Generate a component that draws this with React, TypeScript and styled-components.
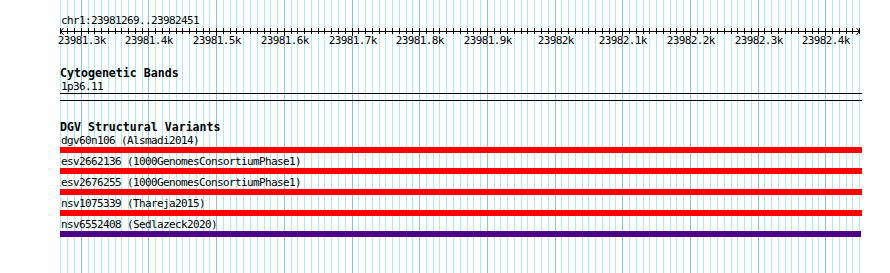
import styled, { createGlobalStyle } from "styled-components";

const START = 23981269;
const END = 23982451;
const X0 = 60.3;
const SCALE = 0.6768;
const LEFT = 60;
const TRACK_WIDTH = 802;

const toX = (pos: number) => Math.floor(X0 + (pos - START) * SCALE) - LEFT;

const gridPositions: number[] = [];
for (let p = 23981270; p <= 23982450; p += 10) gridPositions.push(p);

const majorLabel = (p: number) => {
  const k = p / 1000;
  return `${Number.isInteger(k) ? k : k.toFixed(1)}k`;
};

interface Variant {
  name: string;
  study: string;
  color: string;
  width: number;
}

const variants: Variant[] = [
  { name: "dgv60n106", study: "Alsmadi2014", color: "#ff0000", width: 802 },
  { name: "esv2662136", study: "1000GenomesConsortiumPhase1", color: "#ff0000", width: 802 },
  { name: "esv2676255", study: "1000GenomesConsortiumPhase1", color: "#ff0000", width: 802 },
  { name: "nsv1075339", study: "Thareja2015", color: "#ff0000", width: 802 },
  { name: "nsv6552408", study: "Sedlazeck2020", color: "#4d0083", width: 801 },
];

const GlobalStyle = createGlobalStyle`
  html, body {
    margin: 0;
    padding: 0;
    background: #ffffff;
  }
`;

const Page = styled.div`
  position: relative;
  width: 890px;
  height: 273px;
  overflow: hidden;
  padding-left: ${LEFT}px;
  box-sizing: border-box;
  font-family: "DejaVu Sans Mono", "Liberation Mono", monospace;
  color: #000000;
`;

const GridLayer = styled.svg`
  position: absolute;
  top: 0;
  left: ${LEFT}px;
  z-index: 0;
`;

const Tracks = styled.div`
  position: relative;
  z-index: 1;
  width: ${TRACK_WIDTH}px;
  display: flex;
  flex-direction: column;
`;

const PositionLabel = styled.div`
  margin-top: 15px;
  padding-left: 1px;
  font-size: 11px;
  letter-spacing: -0.62px;
  line-height: 12px;
  height: 12px;
  white-space: pre;
`;

const Ruler = styled.svg`
  display: block;
  overflow: visible;
  font-family: "DejaVu Sans Mono", "Liberation Mono", monospace;
  font-size: 11px;
  letter-spacing: -0.62px;
`;

const Track = styled.section<{ $gap: number }>`
  margin-top: ${(p) => p.$gap}px;
  display: flex;
  flex-direction: column;
`;

const TrackTitle = styled.h3`
  margin: 0;
  font-size: 11.6px;
  font-weight: bold;
  line-height: 14px;
  height: 14px;
  white-space: pre;
`;

const ItemLabel = styled.div`
  padding-top: 1px;
  padding-left: 1px;
  font-size: 11px;
  letter-spacing: -0.62px;
  line-height: 12px;
  height: 12px;
  white-space: pre;
`;

const BandBox = styled.div`
  height: 6px;
  border-top: 1px solid #000000;
  border-bottom: 1px solid #000000;
`;

const Row = styled.div`
  display: flex;
  flex-direction: column;
  margin-bottom: 2px;
`;

const FeatureBar = styled.div<{ $color: string; $width: number }>`
  height: 6px;
  width: ${(p) => p.$width}px;
  background: ${(p) => p.$color};
`;

const App = () => {
  return (
    <>
      <GlobalStyle />
      <Page>
        <GridLayer width={TRACK_WIDTH} height={273} shapeRendering="crispEdges">
          {gridPositions.map((p) => (
            <rect
              key={p}
              x={toX(p)}
              y={0}
              width={1}
              height={273}
              fill={p % 100 === 0 ? "#84c4ea" : "#aeeaf2"}
            />
          ))}
        </GridLayer>
        <Tracks>
          <PositionLabel>{`chr1:${START}..${END}`}</PositionLabel>
          <Ruler width={TRACK_WIDTH} height={24}>
            <g shapeRendering="crispEdges">
              <rect x={0} y={4} width={800} height={1} fill="#000" />
              {gridPositions.map((p) => (
                <rect
                  key={p}
                  x={toX(p)}
                  y={1}
                  width={1}
                  height={p % 100 === 0 ? 8 : 6}
                  fill="#000"
                />
              ))}
            </g>
            <polyline points="3.5,1 0.5,4.5 3.5,8" fill="none" stroke="#000" strokeWidth={1} />
            <polyline points="796.5,1 799.5,4.5 796.5,8" fill="none" stroke="#000" strokeWidth={1} />
            {gridPositions
              .filter((p) => p % 100 === 0)
              .map((p) => (
                <text key={p} x={toX(p) + 0.8} y={17} textAnchor="middle" fill="#000">
                  {majorLabel(p)}
                </text>
              ))}
          </Ruler>
          <Track $gap={15}>
            <TrackTitle>Cytogenetic Bands</TrackTitle>
            <ItemLabel>1p36.11</ItemLabel>
            <BandBox />
          </Track>
          <Track $gap={19}>
            <TrackTitle>DGV Structural Variants</TrackTitle>
            {variants.map((v) => (
              <Row key={v.name}>
                <ItemLabel>{`${v.name} (${v.study})`}</ItemLabel>
                <FeatureBar $color={v.color} $width={v.width} />
              </Row>
            ))}
          </Track>
        </Tracks>
      </Page>
    </>
  );
};

export default App;
